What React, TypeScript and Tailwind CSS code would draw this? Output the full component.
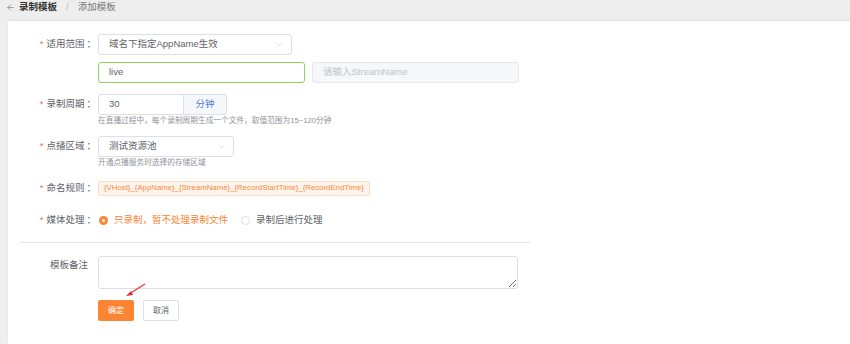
import { ArrowLeft, ChevronDown } from 'lucide-react';

const font = { fontFamily: '"Liberation Sans", "Noto Sans CJK SC", sans-serif' };

function Label({ text, required = true }: { text: string; required?: boolean }) {
  return (
    <div className="w-[90px] shrink-0 pr-[2px] text-right text-[9.5px] leading-[20px] text-[#606266]">
      {required && <span className="mr-[3px] text-[#f56c6c]">*</span>}
      {text}
      <span className="ml-[2px]">：</span>
    </div>
  );
}

function Select({ value, width }: { value: string; width: string }) {
  return (
    <div className={`flex h-[21px] items-center justify-between rounded-[3px] border border-[#dcdfe6] bg-white pl-[10px] pr-[6px] text-[9.5px] text-[#606266] ${width}`}>
      <span>{value}</span>
      <ChevronDown size={11} strokeWidth={1.2} className="text-[#c0c4cc]" />
    </div>
  );
}

export default function App() {
  return (
    <div className="min-h-[344px] bg-[#eeeeee]" style={font}>
      <div className="flex h-[21px] items-start gap-[4px] pl-[6px] pt-[1px] text-[9.5px] leading-[12px] text-[#333]">
        <ArrowLeft size={9} strokeWidth={1.4} className="mt-[2px] text-[#555]" />
        <span className="font-bold">录制模板</span>
        <span className="mx-[5px] text-[#bbb]">/</span>
        <span className="text-[#777]">添加模板</span>
      </div>

      <div className="relative ml-[8px] h-[323px] bg-white pt-[13px] shadow-[0_-1px_2px_rgba(0,0,0,0.06)]">
        {/* 适用范围 */}
        <div className="flex">
          <Label text="适用范围" />
          <div className="flex flex-col gap-[7px]">
            <Select value="域名下指定AppName生效" width="w-[194px]" />
            <div className="flex gap-[7px]">
              <div className="flex h-[21px] w-[207px] items-center rounded-[3px] border border-[#8fd460] pl-[10px] text-[9.5px] text-[#606266]">live</div>
              <div className="flex h-[21px] w-[207px] items-center rounded-[3px] border border-[#e4e7ed] bg-[#f5f7fa] pl-[10px] text-[9.5px] text-[#c0c4cc]">请输入StreamName</div>
            </div>
          </div>
        </div>

        {/* 录制周期 */}
        <div className="mt-[11px] flex">
          <Label text="录制周期" />
          <div className="flex flex-col">
            <div className="flex h-[21px]">
              <div className="flex w-[86px] items-center rounded-l-[3px] border border-[#dcdfe6] pl-[10px] text-[9.5px] text-[#606266]">30</div>
              <div className="flex w-[43px] items-center justify-center rounded-r-[3px] border border-l-0 border-[#dcdfe6] bg-[#f5f7fa] text-[9.5px] text-[#5080d6]">分钟</div>
            </div>
            <div className="mt-[1px] text-[7.7px] leading-[10px] text-[#909399]">在直播过程中，每个录制周期生成一个文件，取值范围为15~120分钟</div>
          </div>
        </div>

        {/* 点播区域 */}
        <div className="mt-[10px] flex">
          <Label text="点播区域" />
          <div className="flex flex-col">
            <Select value="测试资源池" width="w-[136px]" />
            <div className="mt-[1px] text-[7.7px] leading-[10px] text-[#909399]">开通点播服务时选择的存储区域</div>
          </div>
        </div>

        {/* 命名规则 */}
        <div className="mt-[10px] flex items-center">
          <Label text="命名规则" />
          <div className="flex h-[15px] items-center rounded-[2px] border border-[#fcdcc4] bg-[#fff4ec] px-[5px] text-[7.8px] text-[#f98a3d]">
            {'{VHost}_{AppName}_{StreamName}_{RecordStartTime}_{RecordEndTime}'}
          </div>
        </div>

        {/* 媒体处理 */}
        <div className="mt-[12px] flex items-center">
          <Label text="媒体处理" />
          <div className="flex items-center text-[9.5px]">
            <span className="ml-[1px] flex h-[9px] w-[9px] items-center justify-center rounded-full bg-[#fb8533]">
              <span className="h-[3px] w-[3px] rounded-full bg-white" />
            </span>
            <span className="ml-[6px] text-[#fb8533]">只录制，暂不处理录制文件</span>
            <span className="ml-[13px] h-[9px] w-[9px] rounded-full border border-[#dcdfe6]" />
            <span className="ml-[6px] text-[#606266]">录制后进行处理</span>
          </div>
        </div>

        <div className="ml-[12px] mt-[12px] h-px w-[510px] bg-[#e4e7ed]" />

        {/* 模板备注 */}
        <div className="mt-[13px] flex">
          <div className="w-[90px] shrink-0 pr-[10px] pt-[1px] text-right text-[9.5px] leading-[16px] text-[#606266]">模板备注</div>
          <textarea className="h-[33px] w-[420px] rounded-[3px] border border-[#dcdfe6] outline-none" />
        </div>

        <div className="ml-[90px] mt-[11px] flex gap-[9px]">
          <button className="h-[21px] w-[36px] rounded-[2px] bg-[#fb8533] text-[8px] text-white">确定</button>
          <button className="h-[21px] w-[36px] rounded-[2px] border border-[#dcdfe6] bg-white text-[8px] text-[#606266]">取消</button>
        </div>

        <svg className="absolute left-[108px] top-[262px]" width="40" height="16" viewBox="0 0 40 16">
          <line x1="29" y1="1" x2="13" y2="11" stroke="#ee2b2b" strokeWidth="1.1" />
          <polygon points="10,13 15,8 17,12" fill="#ee2b2b" />
        </svg>
      </div>
    </div>
  );
}
